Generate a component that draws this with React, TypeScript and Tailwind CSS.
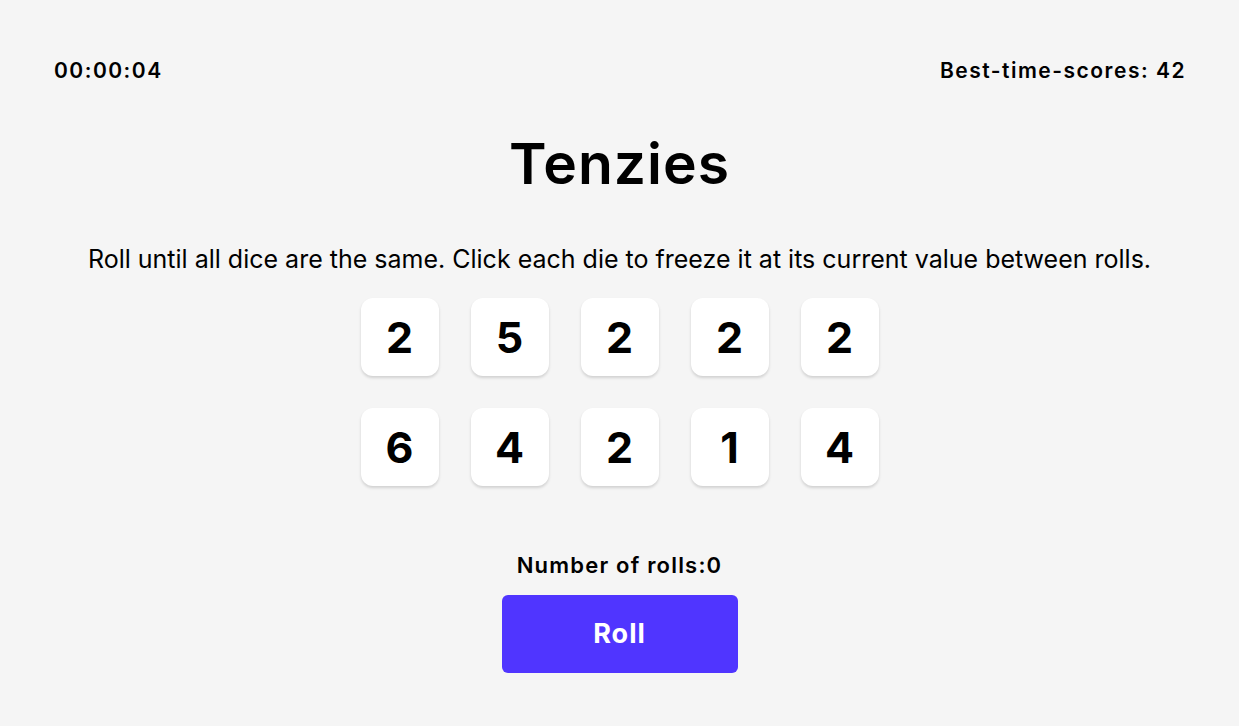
const dice = [2, 5, 2, 2, 2, 6, 4, 2, 1, 4];

function Die({ value }: { value: number }) {
  return (
    <button className="flex h-[78px] w-[78px] items-center justify-center rounded-[12px] bg-white text-[43px] font-bold text-black shadow-[0_2px_3px_rgba(0,0,0,0.15)]">
      {value}
    </button>
  );
}

export default function App() {
  return (
    <div className="min-h-[726px] bg-[#f5f5f5] font-['Inter',sans-serif] text-black">
      <header className="flex items-center justify-between pl-[54px] pr-[53px] pt-[57px] text-[21px] font-semibold leading-[28px] tracking-[1.5px]">
        <span>00:00:04</span>
        <span>Best-time-scores: 42</span>
      </header>

      <main className="flex flex-col items-center">
        <h1 className="mt-[44px] text-[57px] font-semibold leading-[70px] tracking-[1px]">Tenzies</h1>
        <p className="mt-[44px] text-[25px] leading-[32px]">
          Roll until all dice are the same. Click each die to freeze it at its current value between rolls.
        </p>
        <div className="mt-[23px] grid grid-cols-5 gap-x-[32px] gap-y-[32px]">
          {dice.map((d, i) => (
            <Die key={i} value={d} />
          ))}
        </div>
        <p className="mt-[65px] text-[22px] font-semibold leading-[28px] tracking-[1.2px]">Number of rolls:0</p>
        <button className="mt-[16px] h-[78px] w-[236px] rounded-[6px] bg-[#5035ff] text-[27px] font-bold tracking-[1px] text-white">
          Roll
        </button>
      </main>
    </div>
  );
}
